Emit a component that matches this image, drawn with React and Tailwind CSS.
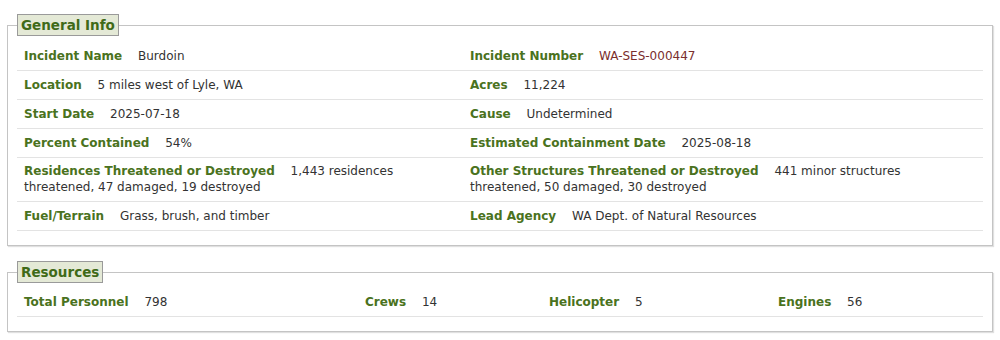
const generalInfo = [
  [
    { label: 'Incident Name', value: 'Burdoin' },
    { label: 'Incident Number', value: 'WA-SES-000447', accent: true },
  ],
  [
    { label: 'Location', value: '5 miles west of Lyle, WA' },
    { label: 'Acres', value: '11,224' },
  ],
  [
    { label: 'Start Date', value: '2025-07-18' },
    { label: 'Cause', value: 'Undetermined' },
  ],
  [
    { label: 'Percent Contained', value: '54%' },
    { label: 'Estimated Containment Date', value: '2025-08-18' },
  ],
  [
    { label: 'Residences Threatened or Destroyed', value: '1,443 residences threatened, 47 damaged, 19 destroyed', wrap: true },
    { label: 'Other Structures Threatened or Destroyed', value: '441 minor structures threatened, 50 damaged, 30 destroyed', wrap: true },
  ],
  [
    { label: 'Fuel/Terrain', value: 'Grass, brush, and timber' },
    { label: 'Lead Agency', value: 'WA Dept. of Natural Resources' },
  ],
]

const resources = [
  { label: 'Total Personnel', value: '798' },
  { label: 'Crews', value: '14' },
  { label: 'Helicopter', value: '5' },
  { label: 'Engines', value: '56' },
]

function Field({ label, value, accent, wrap }) {
  return (
    <div className={`border-b border-[#e3e3e3] pl-[7px] pr-3 pb-[6px] leading-4 ${wrap ? 'pt-[5px]' : 'pt-[6px]'}`}>
      <span className="font-bold text-[#4a7220] mr-3">{label}</span>{' '}
      <span className={accent ? 'text-[#7a2e2e]' : 'text-[#333]'}>{value}</span>
    </div>
  )
}

function Section({ title, children, className }) {
  return (
    <fieldset
      className={`mx-[7px] border border-[#c4c4c4] px-[9px] shadow-[1px_1px_1px_rgba(0,0,0,0.12)] ${className}`}
    >
      <legend className="bg-[#e4e9d6] border border-[#9a9a9a] px-[3px] h-[22px] leading-[20px] text-[13.5px] font-bold text-[#3f6a18]">
        {title}
      </legend>
      {children}
    </fieldset>
  )
}

export default function App() {
  return (
    <div className="bg-white w-[1000px] h-[340px] pt-[14px] text-[12px] font-['DejaVu_Sans',Verdana,sans-serif]">
      <Section title="General Info" className="pb-[14px]">
        <div className="grid grid-cols-[446px_1fr] pt-[6px]">
          {generalInfo.flat().map(f => (
            <Field key={f.label} {...f} />
          ))}
        </div>
      </Section>

      <Section title="Resources" className="mt-[15px] pb-[14px]">
        <div className="grid grid-cols-[341px_184px_229px_1fr] pt-[5px]">
          {resources.map(f => (
            <Field key={f.label} {...f} />
          ))}
        </div>
      </Section>
    </div>
  )
}
